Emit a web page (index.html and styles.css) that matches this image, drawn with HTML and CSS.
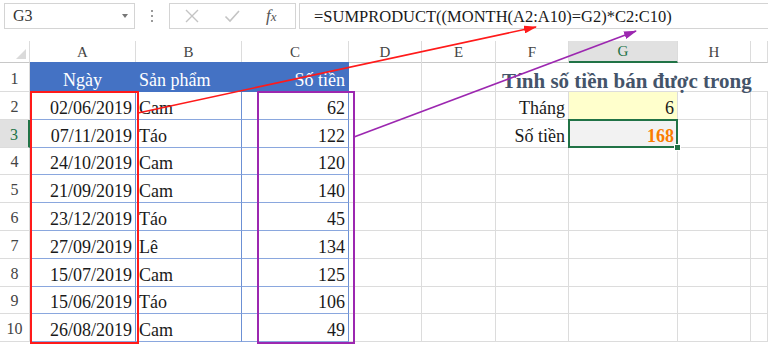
FILE: index.html
```html
<!DOCTYPE html>
<html lang="vi">
<head>
    <meta charset="UTF-8">
    <meta name="viewport" content="width=device-width, initial-scale=1.0">
    <title>SUMPRODUCT theo tháng</title>
    <link rel="stylesheet" href="styles.css">
</head>
<body>
    <div class="formula-bar">
        <div class="name-box">
            <span>G3</span>
            <span class="caret"></span>
        </div>
        <div class="grip"><i></i><i></i><i></i></div>
        <div class="fx-box">
            <svg class="ico" width="16" height="16" viewBox="0 0 16 16"><path d="M2 2 L14 14 M14 2 L2 14" stroke="#c4c4c4" stroke-width="1.4" fill="none"/></svg>
            <svg class="ico" width="16" height="16" viewBox="0 0 16 16"><path d="M1.5 8.5 L6 13 L15 3" stroke="#c4c4c4" stroke-width="1.6" fill="none"/></svg>
            <span class="fx">f<small>x</small></span>
        </div>
        <div class="formula">=SUMPRODUCT((MONTH(A2:A10)=G2)*C2:C10)</div>
    </div>

    <div class="sheet">
        <div class="row col-head">
            <div class="c corner"><span class="tri"></span></div>
            <div class="c">A</div>
            <div class="c">B</div>
            <div class="c">C</div>
            <div class="c">D</div>
            <div class="c">E</div>
            <div class="c">F</div>
            <div class="c active">G</div>
            <div class="c">H</div>
            <div class="c"></div>
        </div>

        <div class="row r1">
            <div class="c rh">1</div>
            <div class="c hd center">Ngày</div>
            <div class="c hd">Sản phẩm</div>
            <div class="c hd num">Số tiền</div>
            <div class="c"></div>
            <div class="c"></div>
            <div class="c title">Tính số tiền bán được trong</div>
        </div>

        <div class="row">
            <div class="c rh">2</div>
            <div class="c t num">02/06/2019</div>
            <div class="c t">Cam</div>
            <div class="c t num">62</div>
            <div class="c"></div>
            <div class="c"></div>
            <div class="c num">Tháng</div>
            <div class="c num input">6</div>
            <div class="c"></div>
            <div class="c"></div>
        </div>

        <div class="row">
            <div class="c rh active">3</div>
            <div class="c t num">07/11/2019</div>
            <div class="c t">Táo</div>
            <div class="c t num">122</div>
            <div class="c"></div>
            <div class="c"></div>
            <div class="c num">Số tiền</div>
            <div class="c num result selected">168</div>
            <div class="c"></div>
            <div class="c"></div>
        </div>

        <div class="row">
            <div class="c rh">4</div>
            <div class="c t num">24/10/2019</div>
            <div class="c t">Cam</div>
            <div class="c t num">120</div>
            <div class="c"></div><div class="c"></div><div class="c"></div>
            <div class="c"></div><div class="c"></div><div class="c"></div>
        </div>

        <div class="row">
            <div class="c rh">5</div>
            <div class="c t num">21/09/2019</div>
            <div class="c t">Cam</div>
            <div class="c t num">140</div>
            <div class="c"></div><div class="c"></div><div class="c"></div>
            <div class="c"></div><div class="c"></div><div class="c"></div>
        </div>

        <div class="row">
            <div class="c rh">6</div>
            <div class="c t num">23/12/2019</div>
            <div class="c t">Táo</div>
            <div class="c t num">45</div>
            <div class="c"></div><div class="c"></div><div class="c"></div>
            <div class="c"></div><div class="c"></div><div class="c"></div>
        </div>

        <div class="row">
            <div class="c rh">7</div>
            <div class="c t num">27/09/2019</div>
            <div class="c t">Lê</div>
            <div class="c t num">134</div>
            <div class="c"></div><div class="c"></div><div class="c"></div>
            <div class="c"></div><div class="c"></div><div class="c"></div>
        </div>

        <div class="row">
            <div class="c rh">8</div>
            <div class="c t num">15/07/2019</div>
            <div class="c t">Cam</div>
            <div class="c t num">125</div>
            <div class="c"></div><div class="c"></div><div class="c"></div>
            <div class="c"></div><div class="c"></div><div class="c"></div>
        </div>

        <div class="row">
            <div class="c rh">9</div>
            <div class="c t num">15/06/2019</div>
            <div class="c t">Táo</div>
            <div class="c t num">106</div>
            <div class="c"></div><div class="c"></div><div class="c"></div>
            <div class="c"></div><div class="c"></div><div class="c"></div>
        </div>

        <div class="row">
            <div class="c rh">10</div>
            <div class="c t num">26/08/2019</div>
            <div class="c t">Cam</div>
            <div class="c t num">49</div>
            <div class="c"></div><div class="c"></div><div class="c"></div>
            <div class="c"></div><div class="c"></div><div class="c"></div>
        </div>
    </div>

    <!-- annotation layer drawn over the sheet -->
    <svg class="marks" width="768" height="345" viewBox="0 0 768 345">
        <defs>
            <marker id="headRed" markerUnits="userSpaceOnUse" markerWidth="13" markerHeight="8" refX="12" refY="4" orient="auto">
                <path d="M0 0 L13 4 L0 8 z" fill="#ff1a1a"/>
            </marker>
            <marker id="headPurple" markerUnits="userSpaceOnUse" markerWidth="13" markerHeight="8" refX="12" refY="4" orient="auto">
                <path d="M0 0 L13 4 L0 8 z" fill="#9c27b0"/>
            </marker>
        </defs>
        <rect x="31" y="92" width="107" height="251" fill="none" stroke="#ff1a1a" stroke-width="2"/>
        <rect x="258" y="92" width="96" height="251" fill="none" stroke="#9c27b0" stroke-width="2"/>
        <line x1="138" y1="113" x2="536" y2="27" stroke="#ff1a1a" stroke-width="1.6" marker-end="url(#headRed)"/>
        <line x1="354" y1="137" x2="636" y2="31" stroke="#9c27b0" stroke-width="1.6" marker-end="url(#headPurple)"/>
    </svg>
</body>
</html>
```

FILE: styles.css
```css
body {
    margin: 0;
    padding: 0;
    width: 768px;
    height: 345px;
    overflow: hidden;
    position: relative;
    background-color: #ffffff;
    font-family: "Liberation Serif", Tinos, "Times New Roman", "DejaVu Serif", serif;
    font-weight: normal;
    color: #1a1a1a;
}
.formula-bar {
    display: flex;
    align-items: center;
    height: 26px;
    padding: 3px 0 12px 4px;
}
.name-box {
    display: flex;
    align-items: center;
    justify-content: space-between;
    box-sizing: border-box;
    width: 131px;
    height: 26px;
    padding: 0 6px 0 8px;
    border: 1px solid #d4d4d4;
    font-size: 16px;
    color: #333;
}
.caret {
    width: 0;
    height: 0;
    border-left: 3.5px solid transparent;
    border-right: 3.5px solid transparent;
    border-top: 4px solid #777;
}
.grip {
    display: flex;
    flex-direction: column;
    gap: 3px;
    margin: 0 16px 0 16px;
}
.grip i {
    display: block;
    width: 2px;
    height: 2px;
    background-color: #9a9a9a;
}
.fx-box {
    display: flex;
    align-items: center;
    box-sizing: border-box;
    width: 127px;
    height: 26px;
    padding-left: 14px;
    border: 1px solid #d4d4d4;
}
.fx-box .ico {
    margin-right: 24px;
}
.fx-box .ico + .ico {
    margin-right: 26px;
}
.fx {
    font-style: italic;
    font-size: 17px;
    color: #555;
}
.fx small {
    font-size: 13px;
}
.formula {
    flex: 1;
    box-sizing: border-box;
    height: 26px;
    margin-left: 3px;
    margin-right: -2px;
    padding: 2px 0 0 14px;
    border: 1px solid #d4d4d4;
    font-size: 16.5px;
    line-height: 22px;
    color: #1a1a1a;
    white-space: nowrap;
}

.row {
    display: grid;
    grid-template-columns: 30px 106px 106px 107px 73px 74px 73px 109px 73px 1fr;
    height: 27.8px;
}
.row.r1 {
    height: 30px;
}
.c {
    box-sizing: border-box;
    display: flex;
    align-items: flex-end;
    padding: 0 3px 1px 3px;
    border-right: 1px solid #dcdcdc;
    border-bottom: 1px solid #dcdcdc;
    font-size: 18px;
    line-height: 20px;
    white-space: nowrap;
}
.num {
    justify-content: flex-end;
}
.center {
    justify-content: center;
}

.col-head {
    height: 21px;
}
.col-head .c {
    justify-content: center;
    align-items: center;
    padding: 0;
    font-size: 15px;
    color: #444;
    border-bottom-color: #c8c8c8;
}
.col-head .c.active {
    background-color: #e1e1e1;
    color: #217346;
    border-bottom: 2px solid #217346;
}
.corner {
    position: relative;
}
.tri {
    position: absolute;
    right: 3px;
    bottom: 3px;
    width: 0;
    height: 0;
    border-left: 10px solid transparent;
    border-bottom: 10px solid #dadada;
}

.rh {
    justify-content: center;
    padding: 0 0 2px 0;
    font-size: 16px;
    color: #444;
}
.rh.active {
    background-color: #e1e1e1;
    color: #217346;
    border-right: 2px solid #217346;
}

.hd {
    background-color: #4472c4;
    color: #ffffff;
    border-color: #4472c4;
}
.t {
    border-right-color: #6c90d4;
    border-bottom-color: #8aa7de;
}
.title {
    grid-column: span 4;
    padding-left: 6px;
    padding-bottom: 0;
    font-size: 21px;
    font-weight: bold;
    color: #44546a;
    border-right: none;
}
.input {
    background-color: #ffffcc;
}
.result {
    background-color: #f2f2f2;
    color: #fa7d00;
    font-weight: bold;
}
.selected {
    position: relative;
}
.selected::after {
    content: "";
    position: absolute;
    left: -1px;
    top: -1px;
    right: -1px;
    bottom: -1px;
    border: 2px solid #217346;
}
.selected::before {
    content: "";
    position: absolute;
    right: -4px;
    bottom: -4px;
    width: 5px;
    height: 5px;
    background-color: #217346;
    border: 1px solid #ffffff;
    z-index: 1;
}

.marks {
    position: absolute;
    left: 0;
    top: 0;
    pointer-events: none;
}
```
